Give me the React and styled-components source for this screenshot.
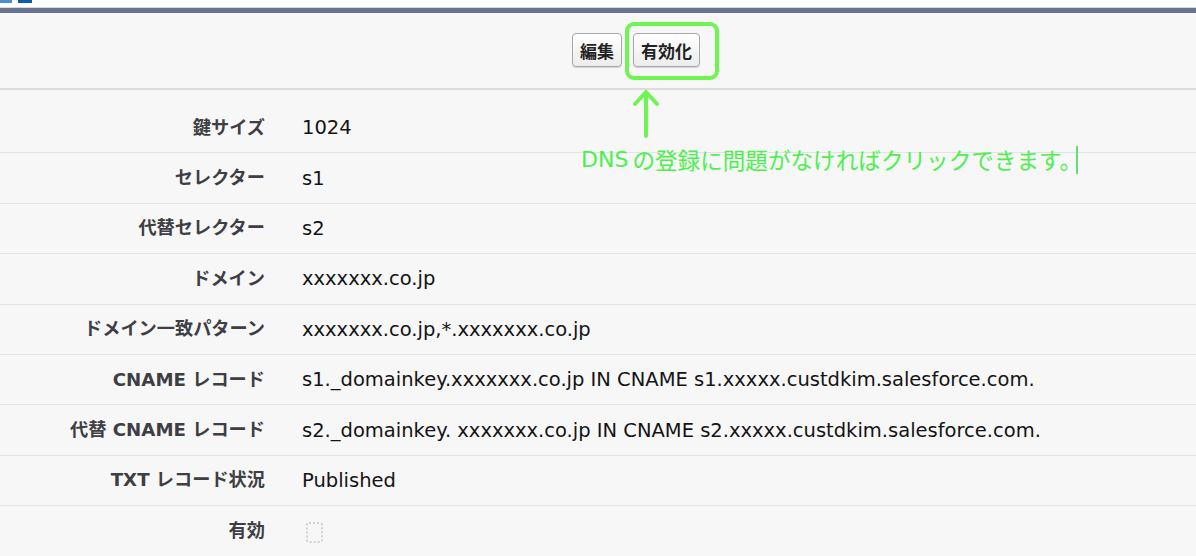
import React from "react";
import styled, { createGlobalStyle } from "styled-components";

const Global = createGlobalStyle`
  html, body { margin: 0; padding: 0; background: #f7f7f7; }
  body { font-family: "DejaVu Sans", "Noto Sans CJK JP", sans-serif; }
`;

const Page = styled.div`
  position: relative;
  width: 1196px;
  height: 556px;
  overflow: hidden;
  background: #f7f7f7;
`;

const TopStrip = styled.div`
  height: 7px;
  background: #ffffff;
  display: flex;
  align-items: flex-start;
  gap: 6px;
`;

const Tab = styled.div`
  width: ${(p) => p.$w}px;
  height: 3px;
  background: ${(p) => p.$c};
`;

const NavBar = styled.div`
  height: 5px;
  border-top: 1px solid #d6d8dc;
  background: #67738f;
`;

const ButtonBar = styled.div`
  display: flex;
  align-items: center;
  gap: 11px;
  padding-left: 572px;
  border-bottom: 2px solid #dcdcdc;
  box-sizing: border-box;
  height: 77px;
`;

const Button = styled.button`
  height: 34px;
  padding: 0 7px;
  margin-top: -1px;
  border: 1px solid #a9a9a9;
  border-radius: 4px;
  background: linear-gradient(#ffffff, #ececec);
  font-family: "Noto Sans CJK JP", sans-serif;
  font-weight: 700;
  font-size: 17px;
  color: #222;
  box-shadow: 0 1px 1px rgba(0, 0, 0, 0.15);
`;

const Table = styled.div`
  padding-top: 13px;
`;

const Row = styled.div`
  display: grid;
  grid-template-columns: 265px 1fr;
  column-gap: 37px;
  align-items: center;
  height: 50.4px;
  box-sizing: border-box;
  border-bottom: ${(p) => (p.$last ? "none" : "1px solid #e3e3e3")};
`;

const Label = styled.div`
  text-align: right;
  font-family: "DejaVu Sans", "Noto Sans CJK JP", sans-serif;
  font-weight: 700;
  font-size: 18.2px;
  color: #3e3e44;
  margin-top: -4px;
  white-space: nowrap;
`;

const Value = styled.div`
  font-family: "DejaVu Sans", "Noto Sans CJK JP", sans-serif;
  font-size: 19.5px;
  color: #141414;
  white-space: nowrap;
`;

const Check = styled.div`
  width: 17px;
  height: 21px;
  margin-left: 4px;
  margin-top: 2px;
  border: 2px dotted #d2d2d2;
  border-radius: 3px;
  box-sizing: border-box;
`;

const Highlight = styled.div`
  position: absolute;
  left: 625px;
  top: 22px;
  width: 94px;
  height: 58px;
  border: 4px solid #6ef552;
  border-radius: 9px;
  box-sizing: border-box;
`;

const Arrow = styled.svg`
  position: absolute;
  left: 632px;
  top: 88px;
`;

const Note = styled.div`
  position: absolute;
  left: 581px;
  top: 143px;
  font-family: "Noto Sans CJK JP", sans-serif;
  font-size: 22.6px;
  color: #4cf04c;
  white-space: nowrap;
  display: flex;
  align-items: center;
`;

const Latin = styled.span`
  font-family: "DejaVu Sans", sans-serif;
  font-size: 22px;
  margin-right: 4px;
`;

const Caret = styled.span`
  display: inline-block;
  width: 2px;
  height: 28px;
  margin-left: -6px;
  background: #5ee07a;
`;

const rows = [
  ["鍵サイズ", "1024"],
  ["セレクター", "s1"],
  ["代替セレクター", "s2"],
  ["ドメイン", "xxxxxxx.co.jp"],
  ["ドメイン一致パターン", "xxxxxxx.co.jp,*.xxxxxxx.co.jp"],
  ["CNAME レコード", "s1._domainkey.xxxxxxx.co.jp IN CNAME s1.xxxxx.custdkim.salesforce.com."],
  ["代替 CNAME レコード", "s2._domainkey. xxxxxxx.co.jp IN CNAME s2.xxxxx.custdkim.salesforce.com."],
  ["TXT レコード状況", "Published"],
];

export default function App() {
  return (
    <Page>
      <Global />
      <TopStrip>
        <Tab $w={12} $c="#4a8fd0" />
        <Tab $w={14} $c="#0d5ea8" />
      </TopStrip>
      <NavBar />
      <ButtonBar>
        <Button>編集</Button>
        <Button>有効化</Button>
      </ButtonBar>
      <Table>
        {rows.map(([l, v]) => (
          <Row key={l}>
            <Label>{l}</Label>
            <Value>{v}</Value>
          </Row>
        ))}
        <Row $last>
          <Label>有効</Label>
          <Check />
        </Row>
      </Table>
      <Highlight />
      <Arrow width="28" height="52" viewBox="0 0 28 52">
        <path
          d="M14 4 L14 48 M3 16 L14 4 L25 16"
          stroke="#6ef552"
          strokeWidth="4"
          fill="none"
          strokeLinecap="round"
          strokeLinejoin="round"
        />
      </Arrow>
      <Note>
        <Latin>DNS</Latin>の登録に問題がなければクリックできます。
        <Caret />
      </Note>
    </Page>
  );
}
